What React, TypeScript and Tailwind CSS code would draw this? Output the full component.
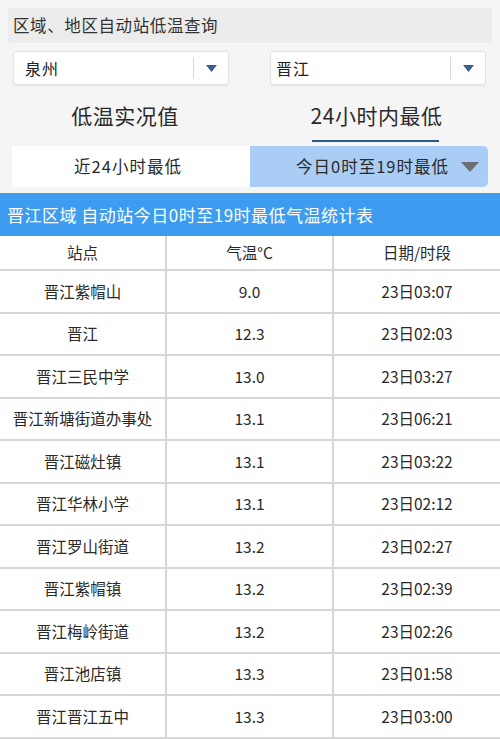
import React from "react";

const rows = [
  ["晋江紫帽山", "9.0", "23日03:07"],
  ["晋江", "12.3", "23日02:03"],
  ["晋江三民中学", "13.0", "23日03:27"],
  ["晋江新塘街道办事处", "13.1", "23日06:21"],
  ["晋江磁灶镇", "13.1", "23日03:22"],
  ["晋江华林小学", "13.1", "23日02:12"],
  ["晋江罗山街道", "13.2", "23日02:27"],
  ["晋江紫帽镇", "13.2", "23日02:39"],
  ["晋江梅岭街道", "13.2", "23日02:26"],
  ["晋江池店镇", "13.3", "23日01:58"],
  ["晋江晋江五中", "13.3", "23日03:00"],
];

function Select({ label, pad }: { label: string; pad: string }) {
  return (
    <div className="flex h-[34px] w-[216px] items-center rounded-[3px] border border-[#e2e2e2] bg-white shadow-[0_1px_2px_rgba(0,0,0,0.06)]">
      <span className={`flex-1 text-[16px] tracking-[1px] text-[#222] ${pad}`}>{label}</span>
      <span className="h-[22px] w-px bg-[#d8d8d8]" />
      <span className="flex w-[34px] justify-center">
        <svg width="11" height="7" viewBox="0 0 11 7" aria-hidden>
          <path d="M0 0H11L5.5 7Z" fill="#3b5f8c" />
        </svg>
      </span>
    </div>
  );
}

export default function App() {
  return (
    <div
      className="h-[739px] w-[500px] overflow-hidden bg-[#f5f5f6] pt-2 text-[#2a2a2a]"
      style={{ fontFamily: '"Noto Sans CJK SC", "Noto Sans", sans-serif' }}
    >
      <div className="mx-2 flex h-[35px] items-center rounded-[2px] bg-[#ececec] px-[5px] text-[16.5px] tracking-[0.6px] text-[#333]">
        区域、地区自动站低温查询
      </div>

      <div className="mt-2 flex justify-between pl-[13px] pr-[14px]">
        <Select label="泉州" pad="pl-[11px]" />
        <Select label="晋江" pad="pl-[5px]" />
      </div>

      <div className="mt-[14px] flex h-[48px]">
        <div className="flex flex-1 items-start justify-center pt-[1px] text-[21px] tracking-[0.5px]">低温实况值</div>
        <div className="flex flex-1 flex-col items-center pt-[1px] text-[21px] tracking-[0.5px]">
          <span className="pl-[3px]">24小时内最低</span>
          <span className="mt-[8px] h-[2px] w-[127px] bg-[#2c5b8a]" />
        </div>
      </div>

      <div className="mx-3 mt-[-1px] flex h-[41px] text-[16.5px] tracking-[1px]">
        <div className="flex w-[238px] items-center justify-center bg-white pr-[6px]">近24小时最低</div>
        <div className="flex flex-1 items-center justify-end rounded-r-[5px] bg-[#a9cdf5] pr-[9px]">
          <span>今日0时至19时最低</span>
          <svg className="ml-[12px]" width="18" height="10" viewBox="0 0 18 10" aria-hidden>
            <path d="M0 0H18L9 10Z" fill="#6b6e73" />
          </svg>
        </div>
      </div>

      <div className="mt-[6px] flex h-[43px] items-center bg-[#3d9cf0] pl-[7px] text-[17px] tracking-[0.5px] text-white">
        晋江区域 自动站今日0时至19时最低气温统计表
      </div>

      <div className="bg-white text-[15.5px] text-[#2a2a2a]">
        <div className="grid h-[35px] grid-cols-[167px_167px_166px] border-b-2 border-[#d6d6d6]">
          <div className="flex items-center justify-center border-r-2 border-[#d6d6d6]">站点</div>
          <div className="flex items-center justify-center border-r-2 border-[#d6d6d6]">气温°C</div>
          <div className="flex items-center justify-center">日期/时段</div>
        </div>
        {rows.map((r) => (
          <div
            key={r[0] + r[2]}
            className="grid h-[42.5px] grid-cols-[167px_167px_166px] border-b-2 border-[#d6d6d6]"
          >
            <div className="flex items-center justify-center border-r-2 border-[#d6d6d6]">{r[0]}</div>
            <div className="flex items-center justify-center border-r-2 border-[#d6d6d6]">{r[1]}</div>
            <div className="flex items-center justify-center">{r[2]}</div>
          </div>
        ))}
      </div>
    </div>
  );
}
